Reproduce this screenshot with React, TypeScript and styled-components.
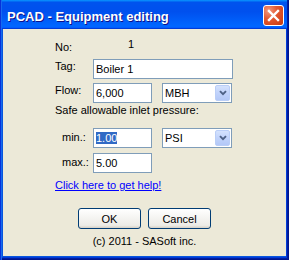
import styled, { createGlobalStyle } from 'styled-components'

const GlobalStyle = createGlobalStyle`
  html, body {
    margin: 0;
    padding: 0;
    background: #ece9d8;
  }
  body {
    font-family: 'Liberation Sans', Arial, sans-serif;
    font-size: 11px;
    color: #000;
  }
`

const ChevronDown = () => (
  <svg width="8" height="6" viewBox="0 0 8 6">
    <path d="M1 1.2 L4 4.2 L7 1.2" fill="none" stroke="#4d6185" strokeWidth="1.9" />
  </svg>
)

const CloseGlyph = () => (
  <svg width="13" height="13" viewBox="0 0 13 13">
    <path d="M2 2 L11 11 M11 2 L2 11" stroke="#fff" strokeWidth="2.4" strokeLinecap="square" />
  </svg>
)

const Combo = ({ value }: { value: string }) => (
  <Select>
    <SelectText>{value}</SelectText>
    <DropButton>
      <ChevronDown />
    </DropButton>
  </Select>
)

export default function App() {
  return (
    <>
      <GlobalStyle />
      <Window>
        <TitleBar>
          <Title>PCAD - Equipment editing</Title>
          <CloseButton>
            <CloseGlyph />
          </CloseButton>
        </TitleBar>
        <Frame>
          <Body>
            <Form>
              <Row $top={0} $height={13}>
                <Label $width={63}>No:</Label>
                <Value>1</Value>
              </Row>
              <Row $top={5}>
                <Label $drop={1}>Tag:</Label>
                <Field $width={140}>Boiler 1</Field>
              </Row>
              <Row $top={4}>
                <Label $drop={1}>Flow:</Label>
                <Field $width={59}>6,000</Field>
                <Combo value="MBH" />
              </Row>
              <Caption>Safe allowable inlet pressure:</Caption>
              <Row $top={11}>
                <Label $indent={7} $drop={3}>min.:</Label>
                <Field $width={59}>
                  <Selected>1.00</Selected>
                </Field>
                <Combo value="PSI" />
              </Row>
              <Row $top={5}>
                <Label $indent={7} $drop={3}>max.:</Label>
                <Field $width={59}>5.00</Field>
              </Row>
              <HelpLink href="#">Click here to get help!</HelpLink>
            </Form>
            <Buttons>
              <Button>OK</Button>
              <Button>Cancel</Button>
            </Buttons>
            <Copyright>(c) 2011 - SASoft inc.</Copyright>
          </Body>
        </Frame>
      </Window>
    </>
  )
}

const Window = styled.div`
  width: 289px;
  height: 260px;
  display: flex;
  flex-direction: column;
  overflow: hidden;
`

const TitleBar = styled.div`
  height: 29px;
  flex: none;
  display: flex;
  justify-content: space-between;
  align-items: flex-start;
  box-sizing: border-box;
  padding: 0 5px 0 7px;
  background: linear-gradient(
    180deg,
    #0997ff 0%,
    #0053ee 8%,
    #0050ee 40%,
    #0066ff 88%,
    #0066ff 93%,
    #005bff 95%,
    #003dd7 96%,
    #003dd7 100%
  );
  box-shadow: inset 1px 0 #0831d9, inset 2px 0 #166aee, inset -1px 0 #00138c, inset -2px 0 #001ea0;
`

const Title = styled.span`
  margin-top: 9px;
  font-family: 'Liberation Sans', Arial, sans-serif;
  font-weight: bold;
  font-size: 13px;
  line-height: 15px;
  color: #fff;
  text-shadow: 1px 1px #0f1089;
`

const CloseButton = styled.div`
  margin-top: 5px;
  width: 21px;
  height: 21px;
  box-sizing: border-box;
  display: flex;
  align-items: center;
  justify-content: center;
  border: 1px solid #fff;
  border-radius: 3px;
  background: radial-gradient(circle at 25% 25%, #f29a80 0%, #e35a34 40%, #d5461c 75%, #c23b12 100%);
`

const Frame = styled.div`
  flex: 1;
  display: flex;
  padding: 0 3px 4px;
  background: #0855dd;
  box-shadow: inset 1px 0 #0831d9, inset 2px 0 #166aee, inset -1px -1px #00138c, inset -2px -2px #001ea0,
    inset -3px -3px #003bda;
`

const Body = styled.div`
  flex: 1;
  display: flex;
  flex-direction: column;
  background: #ece9d8;
  padding-top: 12px;
`

const Form = styled.div`
  display: flex;
  flex-direction: column;
  padding-left: 52px;
`

const Row = styled.div<{ $top: number; $height?: number }>`
  display: flex;
  align-items: flex-start;
  gap: 10px;
  margin-top: ${(p) => p.$top}px;
  height: ${(p) => p.$height ?? 20}px;
`

const Label = styled.span<{ $width?: number; $indent?: number; $drop?: number }>`
  box-sizing: border-box;
  width: ${(p) => p.$width ?? 38}px;
  margin-right: -10px;
  padding-left: ${(p) => p.$indent ?? 0}px;
  padding-top: ${(p) => p.$drop ?? 0}px;
  line-height: 13px;
  white-space: nowrap;
`

const Value = styled.span`
  margin-left: 10px;
  margin-top: -3px;
  line-height: 13px;
`

const Field = styled.div<{ $width: number }>`
  width: ${(p) => p.$width}px;
  height: 20px;
  box-sizing: border-box;
  display: flex;
  align-items: center;
  padding: 0 2px;
  border: 1px solid #7f9db9;
  background: #fff;
  line-height: 13px;
  white-space: nowrap;
`

const Selected = styled.span`
  background: #316ac5;
  color: #fff;
  line-height: 12px;
`

const Select = styled.div`
  width: 70px;
  height: 20px;
  box-sizing: border-box;
  display: flex;
  align-items: center;
  justify-content: space-between;
  padding: 0 1px 0 2px;
  border: 1px solid #7f9db9;
  background: #fff;
`

const SelectText = styled.span`
  line-height: 13px;
`

const DropButton = styled.div`
  width: 15px;
  height: 16px;
  box-sizing: border-box;
  display: flex;
  align-items: center;
  justify-content: center;
  border: 1px solid #bacef7;
  border-radius: 2px;
  background: linear-gradient(180deg, #d4e2fd 0%, #c1d3fb 50%, #b3c8f7 100%);
`

const Caption = styled.span`
  margin-top: 1px;
  line-height: 13px;
`

const HelpLink = styled.a`
  align-self: flex-start;
  margin-top: 6px;
  line-height: 13px;
  color: #0000ff;
  text-decoration: underline;
`

const Buttons = styled.div`
  display: flex;
  justify-content: center;
  gap: 7px;
  margin-top: 16px;
`

const Button = styled.button`
  width: 63px;
  height: 21px;
  padding: 0;
  font-family: 'Liberation Sans', Arial, sans-serif;
  font-size: 11px;
  color: #000;
  border: 1px solid #003c74;
  border-radius: 3px;
  background: linear-gradient(180deg, #fff 0%, #ecebe6 86%, #d6d0c5 100%);
`

const Copyright = styled.div`
  margin-top: 6px;
  line-height: 13px;
  text-align: center;
`
